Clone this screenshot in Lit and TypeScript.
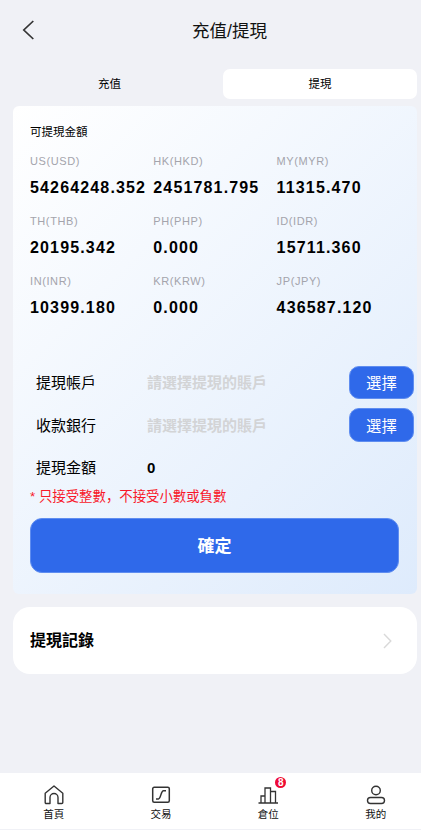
import { LitElement, html, css } from "lit";
import { customElement } from "lit/decorators.js";

const balances = [
  ["US(USD)", "54264248.352"],
  ["HK(HKD)", "2451781.795"],
  ["MY(MYR)", "11315.470"],
  ["TH(THB)", "20195.342"],
  ["PH(PHP)", "0.000"],
  ["ID(IDR)", "15711.360"],
  ["IN(INR)", "10399.180"],
  ["KR(KRW)", "0.000"],
  ["JP(JPY)", "436587.120"],
];

@customElement("app-root")
export class AppRoot extends LitElement {
  static styles = css`
    :host {
      display: block;
      width: 421px;
      height: 830px;
      background: #f0f1f6;
      font-family: "Liberation Sans", "Noto Sans CJK SC", sans-serif;
      color: #000;
      overflow: hidden;
    }
    .page { display: flex; flex-direction: column; height: 830px; }
    .header {
      height: 60px;
      box-sizing: border-box;
      display: flex;
      align-items: center;
      justify-content: center;
      position: relative;
      font-size: 17.5px;
      color: #111;
      padding: 0 0 2px 38px;
    }
    .back { position: absolute; left: 22px; top: 20px; }
    .tabs { display: flex; height: 30px; margin: 9px 4px 7px 0; }
    .tab {
      display: flex; align-items: center; justify-content: center;
      font-size: 11.5px; border-radius: 7px; padding-bottom: 3px; box-sizing: border-box;
    }
    .tab.left { width: 219px; margin-right: 4px; }
    .tab.on { background: #fff; width: 194px; }
    .card {
      margin: 0 4px 0 13px;
      height: 488px;
      box-sizing: border-box;
      padding: 18px 0 0 17px;
      border-radius: 6px;
      background: linear-gradient(135deg, #ffffff 0%, #deebfc 100%);
    }
    .title { font-size: 11.5px; line-height: 16px; margin-bottom: 13px; }
    .grid { display: grid; grid-template-columns: repeat(3, 123.3px); grid-auto-rows: 60px; }
    .lab { font-size: 11px; line-height: 16px; color: #a4a4ac; letter-spacing: 0.6px; }
    .val { font-size: 16px; line-height: 20px; font-weight: 700; letter-spacing: 1.15px; margin-top: 8.5px; white-space: nowrap; }
    .form { margin-top: 33px; display: flex; flex-direction: column; }
    .row { display: flex; align-items: center; font-size: 15px; padding-left: 6px; }
    .row .name { width: 111px; padding-bottom: 2px; }
    .ph { flex: 1; color: #d3d4d6; font-weight: 700; padding-bottom: 2px; }
    .pick {
      width: 65px; box-sizing: border-box;
      height: 33px; border-radius: 10px;
      background: #2f69ea;
      border: 1px solid #5f8df0;
      color: #fff; font-size: 15.4px;
      display: flex; align-items: center; justify-content: center;
      margin-right: 3px;
      padding-bottom: 1px;
    }
    .row.r2 { margin-top: 9px; }
    .row.r2 .pick { height: 34px; }
    .row.r3 { height: 20px; margin-top: 15px; }
    .amount { font-weight: 700; }
    .note { font-size: 13.4px; line-height: 18px; color: #f8182a; margin-top: 11px; }
    .confirm {
      width: 369px; height: 55px; margin-top: 12px;
      box-sizing: border-box;
      border-radius: 12px; background: #2f69ea;
      border: 1px solid #5f8df0;
      color: #fff; font-size: 17px; font-weight: 700;
      display: flex; align-items: center; justify-content: center;
      padding-bottom: 3px;
    }
    .records {
      margin: 13px 4px 0 13px;
      height: 67px;
      box-sizing: border-box;
      border-radius: 17px;
      background: #fff;
      display: flex; align-items: center; justify-content: space-between;
      padding: 0 25px 0 17px;
      font-size: 16px; font-weight: 700;
    }
    .records span { padding-bottom: 3px; }
    .spacer { flex: 1; }
    .nav {
      height: 56px; margin-bottom: 1px;
      background: #fff;
      display: grid; grid-template-columns: repeat(4, 107.33px);
    }
    .item {
      display: flex; flex-direction: column; align-items: center;
      position: relative; padding-top: 12px;
      font-size: 10.5px; line-height: 14px; color: #111;
    }
    .item svg { display: block; margin-bottom: 2px; }
    .badge {
      position: absolute; top: 4px; left: 60.5px;
      width: 11px; height: 11px; border-radius: 50%;
      background: #ee0a35; color: #fff;
      font-size: 10px; line-height: 11px; font-weight: 700; text-align: center;
    }
  `;

  render() {
    return html`<div class="page">
      <div class="header">
        <svg class="back" width="14" height="20" viewBox="0 0 14 20" fill="none" stroke="#333" stroke-width="1.7">
          <path d="M11.3 1 1.8 10 11.3 19" />
        </svg>
        充值/提現
      </div>
      <div class="tabs">
        <div class="tab left">充值</div>
        <div class="tab on">提現</div>
      </div>
      <div class="card">
        <div class="title">可提現金額</div>
        <div class="grid">
          ${balances.map(
            ([l, v]) => html`<div><div class="lab">${l}</div><div class="val">${v}</div></div>`
          )}
        </div>
        <div class="form">
          <div class="row">
            <span class="name">提現帳戶</span><span class="ph">請選擇提現的賬戶</span>
            <span class="pick">選擇</span>
          </div>
          <div class="row r2">
            <span class="name">收款銀行</span><span class="ph">請選擇提現的賬戶</span>
            <span class="pick">選擇</span>
          </div>
          <div class="row r3"><span class="name">提現金額</span><span class="amount">0</span></div>
          <div class="note">* 只接受整數，不接受小數或負數</div>
          <div class="confirm">確定</div>
        </div>
      </div>
      <div class="records">
        <span>提現記錄</span>
        <svg width="9" height="16" viewBox="0 0 9 16" fill="none" stroke="#d9d9d9" stroke-width="1.4">
          <path d="M1 1 7.8 8 1 15" />
        </svg>
      </div>
      <div class="spacer"></div>
      <div class="nav">
        <div class="item">
          <svg width="20" height="20" viewBox="0 0 20 20" fill="none" stroke="#333" stroke-width="1.4" stroke-linejoin="round">
            <path d="M1.2 8.2 10 1 18.8 8.2V17.5a1 1 0 0 1-1 1H14V12.5a4 4 0 0 0-8 0V18.5H2.2a1 1 0 0 1-1-1Z" />
          </svg>
          首頁
        </div>
        <div class="item">
          <svg width="20" height="20" viewBox="0 0 20 20" fill="none" stroke="#333" stroke-width="1.5">
            <rect x="1.7" y="2.3" width="16.6" height="15" rx="1.5" />
            <path d="M5 14H7.5C9.8 14 9.8 5.8 12.5 5.8H15" />
          </svg>
          交易
        </div>
        <div class="item">
          <svg width="20" height="20" viewBox="0 0 20 20" fill="none" stroke="#333" stroke-width="1.3">
            <path d="M0.5 18H20M3 18V11H7M7 18V3H12.5V18M12.5 6.5H17.5V18" />
          </svg>
          倉位
          <span class="badge">8</span>
        </div>
        <div class="item">
          <svg width="20" height="20" viewBox="0 0 20 20" fill="none" stroke="#333" stroke-width="1.4">
            <circle cx="10" cy="5.5" r="4.3" />
            <rect x="1.5" y="12.5" width="17" height="6" rx="3" />
          </svg>
          我的
        </div>
      </div>
    </div>`;
  }
}
